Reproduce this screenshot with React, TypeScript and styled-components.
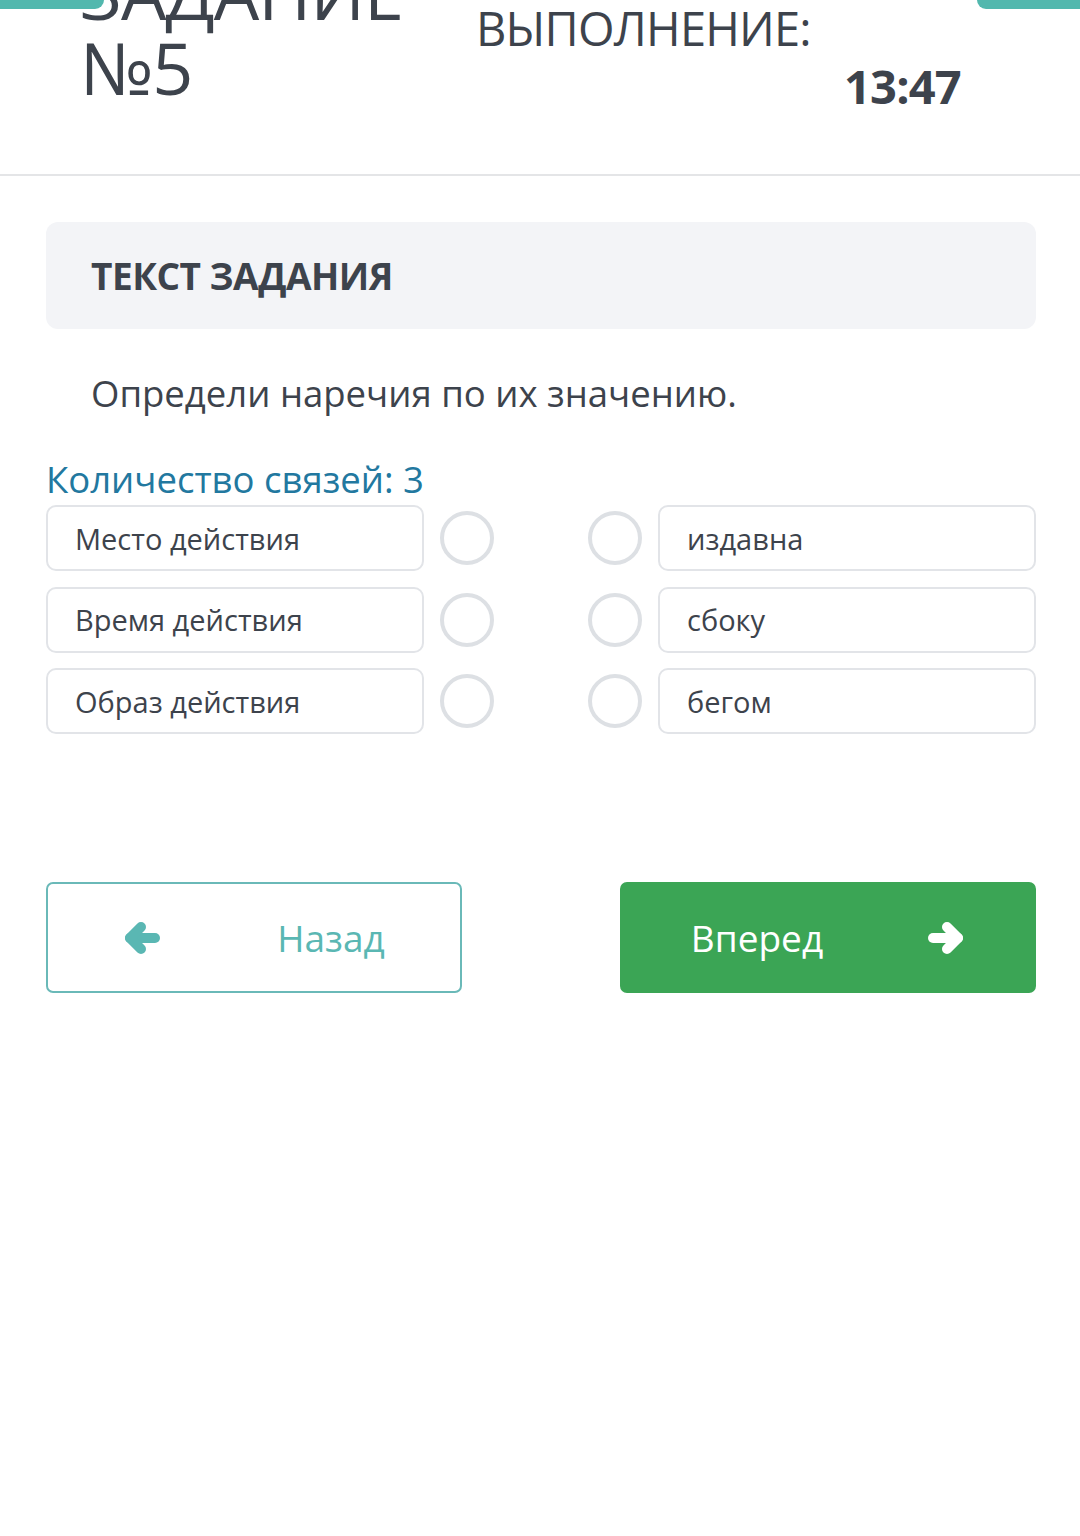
import React from "react";
import styled, { createGlobalStyle } from "styled-components";

const Global = createGlobalStyle`
  html, body { margin: 0; padding: 0; background: #ffffff; }
  body { font-family: "Open Sans", "Noto Sans", sans-serif; color: #3d434c; }
  * { box-sizing: border-box; }
`;

const Page = styled.div`
  width: 1080px;
  min-height: 1536px;
  background: #fff;
`;

const Header = styled.header`
  position: relative;
  height: 176px;
  border-bottom: 2px solid #e4e5e7;
  overflow: hidden;
`;

const Tab = styled.div<{ $side: "left" | "right" }>`
  position: absolute;
  top: 0;
  ${(p) => (p.$side === "left" ? "left: 0;" : "right: 0;")}
  width: ${(p) => (p.$side === "left" ? "104px" : "103px")};
  height: 9px;
  background: #52b8ae;
  border-radius: ${(p) => (p.$side === "left" ? "0 0 10px 0" : "0 0 0 10px")};
  box-shadow: 0 2px 3px rgba(255, 255, 255, 0.9);
  z-index: 2;
`;

const HeaderRow = styled.div`
  display: flex;
  align-items: flex-start;
  margin-top: -45px;
  padding-left: 80px;
`;

const TaskTitle = styled.h1`
  margin: 0;
  font-weight: 400;
  font-size: 72px;
  line-height: 75px;
  color: #3d434c;
  width: 396px;
  letter-spacing: -1px;
`;

const TimerBlock = styled.div`
  display: flex;
  flex-direction: column;
  padding-top: 48px;
`;

const TimerLabel = styled.div`
  font-size: 47px;
  line-height: 50px;
  color: #3d434c;
  letter-spacing: -0.8px;
`;

const TimerValue = styled.div`
  font-size: 47px;
  line-height: 60px;
  font-weight: 700;
  color: #3d434c;
  margin-left: 368px;
  margin-top: 3px;
  letter-spacing: -0.8px;
`;

const Main = styled.main`
  padding: 46px 44px 0 46px;
`;

const TaskBox = styled.section`
  height: 107px;
  background: #f3f4f7;
  border-radius: 12px;
  display: flex;
  align-items: center;
  padding-left: 45px;
`;

const TaskBoxTitle = styled.h2`
  margin: 0;
  font-size: 37px;
  font-weight: 700;
  color: #3d434c;
  letter-spacing: -0.5px;
`;

const Question = styled.p`
  margin: 40px 0 0 45px;
  font-size: 36.5px;
  line-height: 48px;
  color: #3d434c;
`;

const LinksCount = styled.div`
  margin-top: 42px;
  font-size: 36.5px;
  line-height: 40px;
  color: #22789f;
`;

const MatchGrid = styled.div`
  margin-top: 6px;
  display: grid;
  grid-template-columns: 378px 54px 1fr 54px 378px;
  grid-auto-rows: 66px;
  column-gap: 16px;
  row-gap: 15.5px;
  align-items: center;
`;

const Item = styled.div`
  height: 66px;
  border: 2px solid #e2e4e8;
  border-radius: 10px;
  display: flex;
  align-items: center;
  padding-left: 27px;
  font-size: 29px;
  color: #3d434c;
`;

const Dot = styled.div`
  width: 54px;
  height: 54px;
  border-radius: 50%;
  border: 4px solid #dde0e4;
`;

const Spacer = styled.div``;

const Buttons = styled.div`
  margin-top: 148px;
  display: flex;
  justify-content: space-between;
`;

const NavButton = styled.button<{ $primary?: boolean; $gap: number }>`
  width: 416px;
  height: 111px;
  border-radius: 7px;
  display: flex;
  align-items: center;
  justify-content: center;
  gap: ${(p) => p.$gap}px;
  font-family: "Open Sans", "Noto Sans", sans-serif;
  font-size: 37px;
  cursor: pointer;
  border: 2px solid ${(p) => (p.$primary ? "#3ba555" : "#6ab9b8")};
  background: ${(p) => (p.$primary ? "#3ba555" : "#ffffff")};
  color: ${(p) => (p.$primary ? "#ffffff" : "#5ab7b3")};
  padding: 0;
`;

const ArrowSvg = styled.svg`
  width: 38px;
  height: 32px;
  flex: none;
`;

function Arrow({ dir }: { dir: "left" | "right" }) {
  return (
    <ArrowSvg viewBox="0 0 38 32" fill="none">
      <g
        stroke="currentColor"
        strokeWidth={10}
        strokeLinecap="round"
        strokeLinejoin="round"
        transform={dir === "right" ? "translate(38 0) scale(-1 1)" : undefined}
      >
        <path d="M7 16 H32" />
        <path d="M18 5 L7 16 L18 27" />
      </g>
    </ArrowSvg>
  );
}

const left = ["Место действия", "Время действия", "Образ действия"];
const right = ["издавна", "сбоку", "бегом"];

export default function App() {
  return (
    <Page>
      <Global />
      <Header>
        <Tab $side="left" />
        <Tab $side="right" />
        <HeaderRow>
          <TaskTitle>
            ЗАДАНИЕ
            <br />
            №5
          </TaskTitle>
          <TimerBlock>
            <TimerLabel>ВЫПОЛНЕНИЕ:</TimerLabel>
            <TimerValue>13:47</TimerValue>
          </TimerBlock>
        </HeaderRow>
      </Header>
      <Main>
        <TaskBox>
          <TaskBoxTitle>ТЕКСТ ЗАДАНИЯ</TaskBoxTitle>
        </TaskBox>
        <Question>Определи наречия по их значению.</Question>
        <LinksCount>Количество связей: 3</LinksCount>
        <MatchGrid>
          {left.map((l, i) => (
            <React.Fragment key={l}>
              <Item>{l}</Item>
              <Dot />
              <Spacer />
              <Dot />
              <Item>{right[i]}</Item>
            </React.Fragment>
          ))}
        </MatchGrid>
        <Buttons>
          <NavButton $gap={116}>
            <Arrow dir="left" />
            <span>Назад</span>
          </NavButton>
          <NavButton $primary $gap={104}>
            <span>Вперед</span>
            <Arrow dir="right" />
          </NavButton>
        </Buttons>
      </Main>
    </Page>
  );
}
